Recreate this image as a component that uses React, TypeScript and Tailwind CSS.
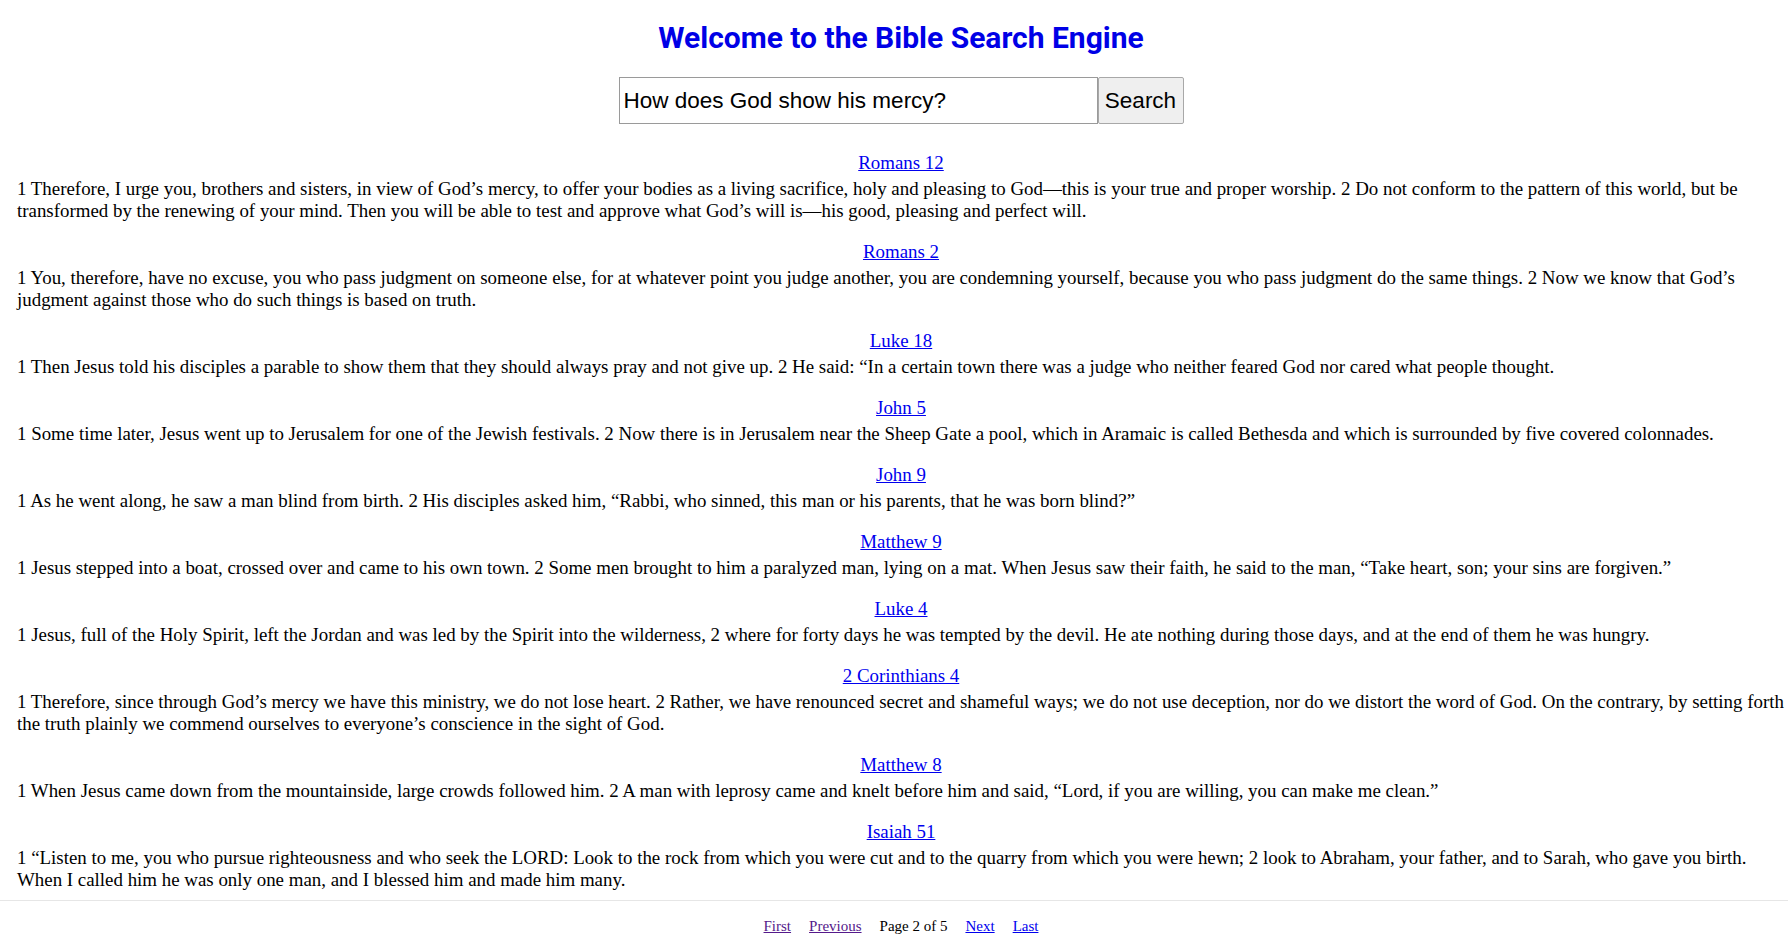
import React from 'react';

type Result = { ref: string; text: string };

const results: Result[] = [
    {
        ref: 'Romans 12',
        text: '1 Therefore, I urge you, brothers and sisters, in view of God’s mercy, to offer your bodies as a living sacrifice, holy and pleasing to God—this is your true and proper worship. 2 Do not conform to the pattern of this world, but be transformed by the renewing of your mind. Then you will be able to test and approve what God’s will is—his good, pleasing and perfect will.',
    },
    {
        ref: 'Romans 2',
        text: '1 You, therefore, have no excuse, you who pass judgment on someone else, for at whatever point you judge another, you are condemning yourself, because you who pass judgment do the same things. 2 Now we know that God’s judgment against those who do such things is based on truth.',
    },
    {
        ref: 'Luke 18',
        text: '1 Then Jesus told his disciples a parable to show them that they should always pray and not give up. 2 He said: “In a certain town there was a judge who neither feared God nor cared what people thought.',
    },
    {
        ref: 'John 5',
        text: '1 Some time later, Jesus went up to Jerusalem for one of the Jewish festivals. 2 Now there is in Jerusalem near the Sheep Gate a pool, which in Aramaic is called Bethesda and which is surrounded by five covered colonnades.',
    },
    {
        ref: 'John 9',
        text: '1 As he went along, he saw a man blind from birth. 2 His disciples asked him, “Rabbi, who sinned, this man or his parents, that he was born blind?”',
    },
    {
        ref: 'Matthew 9',
        text: '1 Jesus stepped into a boat, crossed over and came to his own town. 2 Some men brought to him a paralyzed man, lying on a mat. When Jesus saw their faith, he said to the man, “Take heart, son; your sins are forgiven.”',
    },
    {
        ref: 'Luke 4',
        text: '1 Jesus, full of the Holy Spirit, left the Jordan and was led by the Spirit into the wilderness, 2 where for forty days he was tempted by the devil. He ate nothing during those days, and at the end of them he was hungry.',
    },
    {
        ref: '2 Corinthians 4',
        text: '1 Therefore, since through God’s mercy we have this ministry, we do not lose heart. 2 Rather, we have renounced secret and shameful ways; we do not use deception, nor do we distort the word of God. On the contrary, by setting forth the truth plainly we commend ourselves to everyone’s conscience in the sight of God.',
    },
    {
        ref: 'Matthew 8',
        text: '1 When Jesus came down from the mountainside, large crowds followed him. 2 A man with leprosy came and knelt before him and said, “Lord, if you are willing, you can make me clean.”',
    },
    {
        ref: 'Isaiah 51',
        text: '1 “Listen to me, you who pursue righteousness and who seek the LORD: Look to the rock from which you were cut and to the quarry from which you were hewn; 2 look to Abraham, your father, and to Sarah, who gave you birth. When I called him he was only one man, and I blessed him and made him many.',
    },
];

export default function App() {
    return (
        <div className="min-h-screen bg-white text-black">
            <div className="pl-[17px] pr-[3px]">
                {/* Header + search */}
                <h1 className="pt-[19px] text-center font-['Roboto',sans-serif] text-[30px] leading-[38px] font-bold text-[#0000e6]">
                    Welcome to the Bible Search Engine
                </h1>
                <form className="mt-[20px] flex justify-center" onSubmit={e => e.preventDefault()}>
                    <input
                        type="text"
                        defaultValue="How does God show his mercy?"
                        className="h-[47px] w-[479px] border border-[#9a9a9a] bg-white px-[4px] font-['Liberation_Sans',Arial,sans-serif] text-[22.5px] text-black outline-none"
                    />
                    <button
                        type="submit"
                        className="h-[47px] w-[86px] rounded-[2px] border border-[#a8a8a8] bg-[#efefef] font-['Liberation_Sans',Arial,sans-serif] text-[22.5px] text-black"
                    >
                        Search
                    </button>
                </form>

                {/* Results */}
                <div className="mt-[28px] font-['Liberation_Serif','Times_New_Roman',serif] text-[18.9px] leading-[22px]">
                    {results.map(r => (
                        <div key={r.ref} className="mb-[19px] last:mb-[9px]">
                            <a href="#" className="block text-center text-[#0000ee] underline">
                                {r.ref}
                            </a>
                            <p className="mt-[4px]">{r.text}</p>
                        </div>
                    ))}
                </div>
            </div>

            {/* Pagination */}
            <div className="border-t border-[#e6e6e6] pl-[17px] pr-[3px] pt-[14px] pb-3">
                <div className="flex items-center justify-center gap-[18px] font-['Liberation_Serif','Times_New_Roman',serif] text-[15px]">
                    <a href="#" className="text-[#551a8b] underline">First</a>
                    <a href="#" className="text-[#551a8b] underline">Previous</a>
                    <span>Page 2 of 5</span>
                    <a href="#" className="text-[#0000ee] underline">Next</a>
                    <a href="#" className="text-[#0000ee] underline">Last</a>
                </div>
            </div>
        </div>
    );
}
